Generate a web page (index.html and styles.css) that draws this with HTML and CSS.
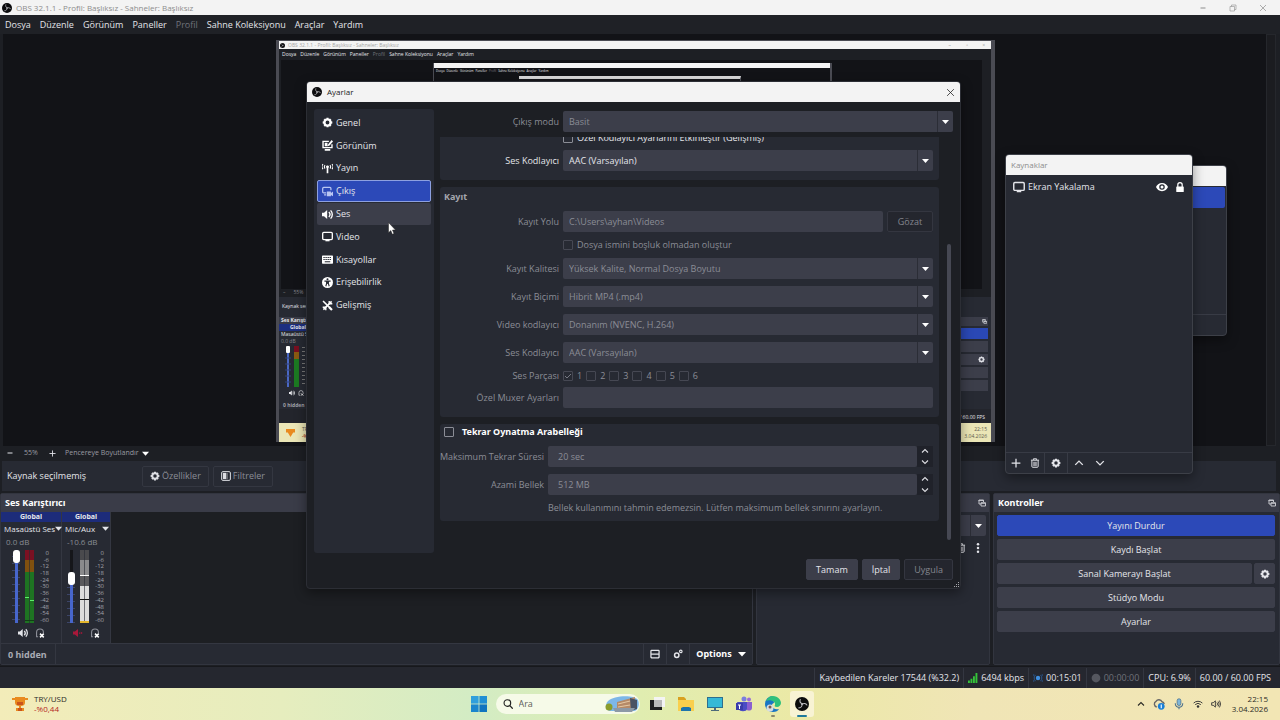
FILE: index.html
```html
<!DOCTYPE html>
<html lang="tr">
<head>
    <meta charset="UTF-8">
    <meta name="viewport" content="width=device-width, initial-scale=1.0">
    <title>OBS 32.1.1 - Ayarlar</title>
    <link rel="stylesheet" href="styles.css">
</head>
<body>
    <!-- Simgeler -->
    <svg class="defs" aria-hidden="true">
        <symbol id="i-obs" viewBox="0 0 20 20">
            <circle cx="10" cy="10" r="10" fill="#0b0b0d"/>
            <g fill="none" stroke="#b9b9be" stroke-width="1.5" stroke-linecap="round">
                <path d="M10 9.500C7.500 8.500 6.500 6 7.500 3.500"/>
                <path d="M10.500 10C12.500 8.500 15.500 9 17 11.500"/>
                <path d="M10 10.500C10.500 13 8.500 15.500 5.500 15.500"/>
            </g>
            <circle cx="10" cy="10" r="1.500" fill="#b9b9be"/>
        </symbol>
        <symbol id="i-gear" viewBox="0 0 16 16">
            <path fill="currentColor" fill-rule="evenodd" d="M6.500 1h3l.5 1.900 1.700-.9 2.200 2.200-.9 1.700 2 .6v3l-2 .6.9 1.700-2.200 2.200-1.700-.9-.5 1.900h-3l-.5-1.900-1.700.9-2.200-2.200.9-1.700-2-.6v-3l2-.6-.9-1.700L4.300 2l1.700.9zM8 5.200a2.800 2.800 0 1 0 0 5.600 2.800 2.800 0 0 0 0-5.600z"/>
        </symbol>
        <symbol id="i-look" viewBox="0 0 16 16">
            <path fill="none" stroke="currentColor" stroke-width="2" d="M10 2H1.500v9h13V6"/>
            <path fill="currentColor" d="M14 0l2 2-5 6-3 1 1-3zM4 13h8v2.500H4zM4 4h4v5H4z"/>
        </symbol>
        <symbol id="i-antenna" viewBox="0 0 16 16">
            <path fill="none" stroke="currentColor" stroke-width="1.600" d="M1.500 1.500a5.500 5.500 0 0 0 0 7.500M14.500 1.500a5.500 5.500 0 0 1 0 7.500M4.500 3a3.500 3.500 0 0 0 0 5M11.500 3a3.500 3.500 0 0 1 0 5"/>
            <path fill="currentColor" d="M8 3.500a2 2 0 0 1 1.200 3.700V15H6.800V7.200A2 2 0 0 1 8 3.500z"/>
        </symbol>
        <symbol id="i-output" viewBox="0 0 16 16">
            <path fill="none" stroke="currentColor" stroke-width="1.800" d="M6 10H2.500A1.500 1.500 0 0 1 1 8.500v-5A1.500 1.500 0 0 1 2.500 2h9A1.500 1.500 0 0 1 13 3.500V6M3 13h3"/>
            <path fill="currentColor" d="M7 8h6v2l3-2v7l-3-2v2H7z"/>
        </symbol>
        <symbol id="i-speaker" viewBox="0 0 16 16">
            <path fill="currentColor" d="M0 5.500h3L7.500 1.500v13L3 10.500H0z"/>
            <path fill="none" stroke="currentColor" stroke-width="2" d="M10 4.500a5 5 0 0 1 0 7M12.500 2a8.500 8.500 0 0 1 0 12"/>
        </symbol>
        <symbol id="i-monitor" viewBox="0 0 16 16">
            <rect x="1" y="2" width="14" height="10.500" rx="1.500" fill="none" stroke="currentColor" stroke-width="1.900"/>
            <path fill="currentColor" d="M5 13h6v2H5z"/>
        </symbol>
        <symbol id="i-keys" viewBox="0 0 16 16">
            <rect x="0" y="2" width="16" height="12" rx="1" fill="currentColor"/>
            <path stroke="#272a33" stroke-width="1.500" stroke-dasharray="2 1" d="M2 5h12M2 8h12"/>
            <path stroke="#272a33" stroke-width="1.500" d="M4 11.300h8"/>
        </symbol>
        <symbol id="i-access" viewBox="0 0 16 16">
            <circle cx="8" cy="8" r="8" fill="currentColor"/>
            <circle cx="8" cy="3.300" r="1.500" fill="#272a33"/>
            <path fill="none" stroke="#272a33" stroke-width="1.600" d="M3.500 6h9M6.800 6v3.500L5.500 13.500M9.200 6v3.500l1.300 4"/>
            <path fill="#272a33" d="M6.200 6h3.600v4H6.200z"/>
        </symbol>
        <symbol id="i-tools" viewBox="0 0 16 16">
            <path fill="none" stroke="currentColor" stroke-width="2.200" d="M1.500 1.500L10 10M14 2L2 14"/>
            <path fill="none" stroke="currentColor" stroke-width="3.200" d="M10 10l4.500 4.500"/>
            <path fill="none" stroke="currentColor" stroke-width="2" d="M10.500 1.500v4h4.500M1 10.500h4.500V15"/>
        </symbol>
        <symbol id="i-eye" viewBox="0 0 16 16">
            <path fill="currentColor" fill-rule="evenodd" d="M8 2.500c4 0 6.800 2.500 8 5.500-1.200 3-4 5.500-8 5.500S1.200 11 0 8c1.200-3 4-5.500 8-5.500zM8 4.300a3.700 3.700 0 1 0 0 7.400 3.700 3.700 0 0 0 0-7.400zM8 6a2 2 0 1 1 0 4 2 2 0 0 1 0-4z"/>
        </symbol>
        <symbol id="i-lock" viewBox="0 0 16 16">
            <path fill="none" stroke="currentColor" stroke-width="2" d="M4.500 8V4.500a3.500 3.500 0 0 1 7 0V8"/>
            <rect x="2" y="7" width="12" height="9" rx="1" fill="currentColor"/>
        </symbol>
        <symbol id="i-plus" viewBox="0 0 16 16">
            <path stroke="currentColor" stroke-width="2" d="M8 1v14M1 8h14"/>
        </symbol>
        <symbol id="i-minus" viewBox="0 0 16 16">
            <path stroke="currentColor" stroke-width="2" d="M3 8h10"/>
        </symbol>
        <symbol id="i-trash" viewBox="0 0 16 16">
            <path fill="none" stroke="currentColor" stroke-width="1.600" d="M1.500 3.500h13M5.500 3V1.300h5V3M3 4v9.500a1.300 1.300 0 0 0 1.300 1.300h7.400A1.300 1.300 0 0 0 13 13.500V4"/>
            <path fill="currentColor" opacity=".6" d="M5 6h6v7H5z"/>
        </symbol>
        <symbol id="i-up" viewBox="0 0 16 16">
            <path fill="none" stroke="currentColor" stroke-width="2.200" d="M2 11l6-6 6 6"/>
        </symbol>
        <symbol id="i-down" viewBox="0 0 16 16">
            <path fill="none" stroke="currentColor" stroke-width="2.200" d="M2 5l6 6 6-6"/>
        </symbol>
        <symbol id="i-caret" viewBox="0 0 16 16">
            <path fill="currentColor" d="M0 4h16l-8 9z"/>
        </symbol>
        <symbol id="i-float" viewBox="0 0 16 16">
            <path fill="none" stroke="currentColor" stroke-width="2" d="M6 10H2V2h9v4M1 3h10"/>
            <path fill="none" stroke="currentColor" stroke-width="2" d="M6 7.500h9V14H6zM6 8.500h9"/>
        </symbol>
        <symbol id="i-filter" viewBox="0 0 16 16">
            <rect x="1" y="1" width="14" height="14" rx="2" fill="none" stroke="currentColor" stroke-width="1.600"/>
            <path fill="currentColor" d="M3 3h5v10H3z"/>
            <path fill="currentColor" opacity=".4" d="M8 3h3v10H8z"/>
        </symbol>
        <symbol id="i-phones" viewBox="0 0 16 16">
            <path fill="none" stroke="currentColor" stroke-width="1.800" d="M5 14H2.500V7a5.500 5.500 0 0 1 11 0v1"/>
            <path stroke="#fff" stroke-width="2.400" d="M8 9l6 6M14 9l-6 6"/>
        </symbol>
        <symbol id="i-muted" viewBox="0 0 16 16">
            <path fill="currentColor" d="M0 5.500h3L8 1.500v13L3 10.500H0zM9.500 7h2v2h-2zM12.500 6l3 2-3 2z"/>
        </symbol>
        <symbol id="i-rows" viewBox="0 0 16 16">
            <path fill="none" stroke="currentColor" stroke-width="2" d="M2.500 2h11l1 1v10l-1 1h-11l-1-1V3zM2 8h12"/>
        </symbol>
        <symbol id="i-gears" viewBox="0 0 16 16">
            <circle cx="6" cy="10" r="3.500" fill="none" stroke="currentColor" stroke-width="2.400"/>
            <circle cx="12.500" cy="3.800" r="2" fill="none" stroke="currentColor" stroke-width="1.800"/>
        </symbol>
        <symbol id="i-close" viewBox="0 0 16 16">
            <path stroke="currentColor" stroke-width="1.400" d="M2 2l12 12M14 2L2 14"/>
        </symbol>
        <symbol id="i-max" viewBox="0 0 16 16">
            <path fill="none" stroke="currentColor" stroke-width="1.200" d="M2 5h9v9H2zM5 5V2h9v9h-3"/>
        </symbol>
    </svg>

    <header class="titlebar">
        <svg class="logo"><use href="#i-obs"/></svg>
        <span class="titlebar-text">OBS 32.1.1 - Profil: Başlıksız - Sahneler: Başlıksız</span>
        <button aria-label="Küçült"><svg class="ic8"><use href="#i-minus"/></svg></button>
        <button aria-label="Ekranı kapla"><svg class="ic8"><use href="#i-max"/></svg></button>
        <button aria-label="Kapat"><svg class="ic8"><use href="#i-close"/></svg></button>
    </header>

    <nav class="menubar">
        <a href="#">Dosya</a>
        <a href="#">Düzenle</a>
        <a href="#">Görünüm</a>
        <a href="#">Paneller</a>
        <a href="#" class="off">Profil</a>
        <a href="#">Sahne Koleksiyonu</a>
        <a href="#">Araçlar</a>
        <a href="#">Yardım</a>
    </nav>

    <!-- Önizleme -->
    <main class="preview">
        <div class="canvas">
            <div class="mirror">
                <div class="m-title"><svg><use href="#i-obs"/></svg><span>OBS 32.1.1 - Profil: Başlıksız - Sahneler: Başlıksız</span><i>–</i><i>▫</i><i>×</i></div>
                <div class="m-menu"><span>Dosya</span><span>Düzenle</span><span>Görünüm</span><span>Paneller</span><span class="off">Profil</span><span>Sahne Koleksiyonu</span><span>Araçlar</span><span>Yardım</span></div>
                <div class="m-view">
                    <div class="mm">
                        <div class="mm-title"></div>
                        <div class="mm-menu"><span>Dosya</span><span>Düzenle</span><span>Görünüm</span><span>Paneller</span><span class="off">Profil</span><span>Sahne Koleksiyonu</span><span>Araçlar</span><span>Yardım</span></div>
                        <div class="mmm"></div>
                    </div>
                </div>
                <div class="m-zoom"><span>–</span><span>55%</span></div>
                <div class="m-context">Kaynak seçilmemiş</div>
                <div class="m-docks">
                    <div class="m-mixer">
                        <b>Ses Karıştırıcı</b>
                        <em>Global</em>
                        <span>Masaüstü Ses</span>
                        <small>0.0 dB</small>
                        <svg class="m-meter" viewBox="0 0 24 41">
                            <path stroke="#4a68c4" stroke-width="2" d="M6 2v39"/>
                            <path stroke="#33437e" d="M3 12h6M3 18h6M3 24h6M3 30h6M3 36h6"/>
                            <rect x="4" y="0" width="4" height="7" rx="1" fill="#fff"/>
                            <path fill="#7a0f20" d="M12 0h5v6h-5z"/>
                            <path fill="#8a5a12" d="M12 6h5v7h-5z"/>
                            <path fill="#1c7a22" d="M12 13h5v28h-5z"/>
                            <path stroke="#777" stroke-dasharray="1 3" stroke-width="3" d="M21.500 1v40"/>
                        </svg>
                        <div class="m-icons"><svg><use href="#i-speaker"/></svg><svg><use href="#i-phones"/></svg></div>
                        <strong>0 hidden</strong>
                    </div>
                    <div class="m-controls">
                        <div class="m-head"><svg><use href="#i-float"/></svg></div>
                        <div class="m-btn on"></div>
                        <div class="m-btn"></div>
                        <div class="m-btn gear"><svg><use href="#i-gear"/></svg></div>
                        <div class="m-btn"></div>
                        <div class="m-btn"></div>
                    </div>
                </div>
                <div class="m-status">60.00 / 60.00 FPS</div>
                <div class="m-task">
                    <svg viewBox="0 0 10 10"><path fill="#e98a1f" d="M0 1h10v4H8l-3 5-3-5H0z"/></svg>
                    <span>TRY/USD<br><b>-%0,44</b></span>
                    <span class="m-clock">22:15<br>3.04.2026</span>
                </div>
            </div>
        </div>
        <div class="vscroll"></div>
    </main>

    <div class="zoombar">
        <button aria-label="Uzaklaştır"><svg class="ic8"><use href="#i-minus"/></svg></button>
        <span class="zoom-value">55%</span>
        <button aria-label="Yakınlaştır"><svg class="ic7"><use href="#i-plus"/></svg></button>
        <button class="zoom-mode">Pencereye Boyutlandır <svg class="ic7"><use href="#i-caret"/></svg></button>
    </div>

    <div class="contextbar">
        <span class="context-text">Kaynak seçilmemiş</span>
        <button class="btn-flat" disabled><svg class="ic10"><use href="#i-gear"/></svg>Özellikler</button>
        <button class="btn-flat" disabled><svg class="ic10"><use href="#i-filter"/></svg>Filtreler</button>
    </div>

    <!-- Paneller -->
    <div class="docks">
        <section class="dock mixer">
            <h2>Ses Karıştırıcı</h2>
            <div class="strips">
                <div class="strip">
                    <div class="strip-tag">Global</div>
                    <button class="strip-name">Masaüstü Ses <svg class="ic7"><use href="#i-caret"/></svg></button>
                    <div class="strip-db">0.0 dB</div>
                    <div class="levels">
                        <input class="fader" type="range" min="0" max="100" value="100" aria-label="Masaüstü Ses seviyesi">
                        <svg class="meter" viewBox="0 0 10 73">
                            <path fill="#7a1022" d="M0 0h9v10H0z"/>
                            <path fill="#80500f" d="M0 10h9v12H0z"/>
                            <path fill="#1e7322" d="M0 22h9v51H0z"/>
                            <path stroke="#272a33" stroke-width="1" d="M4.500 0v73" opacity=".6"/>
                            <path stroke="#5cf06a" d="M0 47.500h4M5 50.500h4"/>
                            <path stroke="#123d16" d="M0 70.500h9"/>
                        </svg>
                        <ol class="scale"><li>0</li><li>-6</li><li>-12</li><li>-18</li><li>-24</li><li>-30</li><li>-36</li><li>-42</li><li>-48</li><li>-54</li><li>-60</li></ol>
                    </div>
                    <div class="strip-icons">
                        <button aria-label="Sessiz"><svg class="ic10"><use href="#i-speaker"/></svg></button>
                        <button aria-label="Dinleme" class="dim"><svg class="ic10"><use href="#i-phones"/></svg></button>
                    </div>
                </div>
                <div class="strip narrow">
                    <div class="strip-tag">Global</div>
                    <button class="strip-name">Mic/Aux <svg class="ic7"><use href="#i-caret"/></svg></button>
                    <div class="strip-db">-10.6 dB</div>
                    <div class="levels">
                        <input class="fader low" type="range" min="0" max="100" value="63" aria-label="Mic/Aux seviyesi">
                        <svg class="meter" viewBox="0 0 10 73">
                            <path fill="#4a4a4d" d="M0 0h9v10H0z"/>
                            <path fill="#8a8a8c" d="M0 10h9v15H0z"/>
                            <path fill="#5a5a5d" d="M0 25h9v11H0z"/>
                            <path fill="#dcdcdc" d="M0 36h9v35H0z"/>
                            <path stroke="#272a33" stroke-width="1" d="M4.500 0v73" opacity=".6"/>
                            <path stroke="#fff" d="M0 25.500h9"/>
                            <path stroke="#111" d="M0 49.500h9"/>
                            <path stroke="#e3b62c" stroke-width="2" d="M0 72h9"/>
                        </svg>
                        <ol class="scale"><li>0</li><li>-6</li><li>-12</li><li>-18</li><li>-24</li><li>-30</li><li>-36</li><li>-42</li><li>-48</li><li>-54</li><li>-60</li></ol>
                    </div>
                    <div class="strip-icons">
                        <button aria-label="Sesi aç" class="muted"><svg class="ic10"><use href="#i-muted"/></svg></button>
                        <button aria-label="Dinleme" class="dim"><svg class="ic10"><use href="#i-phones"/></svg></button>
                    </div>
                </div>
            </div>
            <footer class="mixer-foot">
                <span class="hidden-count">0 hidden</span>
                <button aria-label="Düzen"><svg class="ic10"><use href="#i-rows"/></svg></button>
                <button aria-label="Ses ayarları"><svg class="ic10"><use href="#i-gears"/></svg></button>
                <button class="options">Options <svg class="ic8"><use href="#i-caret"/></svg></button>
            </footer>
        </section>

        <section class="dock transitions">
            <h2><svg class="ic8"><use href="#i-float"/></svg></h2>
            <select class="select" aria-label="Geçiş"><option></option></select>
            <div class="trans-tools">
                <button aria-label="Sil"><svg class="ic10"><use href="#i-trash"/></svg></button>
                <button aria-label="Diğer"><svg class="ic10" viewBox="0 0 16 16"><g fill="currentColor"><circle cx="8" cy="2" r="2"/><circle cx="8" cy="8" r="2"/><circle cx="8" cy="14" r="2"/></g></svg></button>
            </div>
        </section>

        <section class="dock controls">
            <h2><span>Kontroller</span><svg class="ic8"><use href="#i-float"/></svg></h2>
            <div class="control-list">
                <button class="btn primary">Yayını Durdur</button>
                <button class="btn">Kaydı Başlat</button>
                <div class="control-pair">
                    <button class="btn">Sanal Kamerayı Başlat</button>
                    <button class="btn" aria-label="Sanal kamera ayarları"><svg class="ic10"><use href="#i-gear"/></svg></button>
                </div>
                <button class="btn">Stüdyo Modu</button>
                <button class="btn">Ayarlar</button>
            </div>
        </section>
    </div>

    <div class="statusbar">
        <span>Kaybedilen Kareler 17544 (%32.2)</span>
        <span><svg class="ic10" viewBox="0 0 16 16"><path fill="#35c43a" d="M0 12h3v4H0zM4 9h3v7H4zM8 5h3v11H8zM12 0h3v16h-3z"/></svg>6494 kbps</span>
        <span><svg class="ic10" viewBox="0 0 16 16"><circle cx="8" cy="8" r="3.500" fill="#3f8fe0"/><path fill="none" stroke="#2a5a94" stroke-width="1.500" d="M4 3a7 7 0 0 0 0 10M12 3a7 7 0 0 1 0 10M1.500 2a9 9 0 0 0 0 12M14.500 2a9 9 0 0 1 0 12"/></svg>00:15:01</span>
        <span class="off"><svg class="ic10" viewBox="0 0 16 16"><circle cx="8" cy="8" r="7" fill="#55575f"/></svg>00:00:00</span>
        <span>CPU: 6.9%</span>
        <span>60.00 / 60.00 FPS</span>
    </div>

    <!-- Görev çubuğu -->
    <footer class="taskbar">
        <div class="widget">
            <svg class="ic16" viewBox="0 0 16 16"><path fill="#e98a1f" d="M0 2h3v2H0zM13 2h3v2h-3zM3 1h10v6c0 2-2 3-4 3v2h3v3H4v-3h3v-2C5 10 3 9 3 7z"/><path fill="#c9541c" d="M5 6h6v3H5zM6 12h4v3H6z"/></svg>
            <p>TRY/USD<br><b>-%0,44</b></p>
        </div>
        <div class="apps">
            <button aria-label="Başlat"><svg class="ic16" viewBox="0 0 16 16"><path fill="#2f9fdc" d="M0 0h7.600v7.600H0z"/><path fill="#1f8fd4" d="M8.400 0H16v7.600H8.400z"/><path fill="#1b86cd" d="M0 8.400h7.600V16H0z"/><path fill="#0f74bf" d="M8.400 8.400H16V16H8.400z"/></svg></button>
            <label class="search">
                <svg class="ic10" viewBox="0 0 16 16"><circle cx="7" cy="6.500" r="5.300" fill="none" stroke="#222" stroke-width="1.800"/><path stroke="#222" stroke-width="2" d="M11 10.500l4.500 5"/></svg>
                <input type="text" placeholder="Ara" aria-label="Ara">
                <svg class="search-art" viewBox="0 0 34 16">
                    <path fill="#7db7e8" d="M3 5C8 0 28-2 33 4c2 5 0 10-4 11H6C1 15-1 10 3 5z"/>
                    <path fill="#b58a68" d="M12 6l18-5v12H12z"/>
                    <path fill="#4a5263" d="M25 2l7 2v9l-6 2z"/>
                    <path stroke="#e6c9a4" stroke-width="1" d="M13 8l12-3M13 11l12-2"/>
                    <path fill="#8c99a6" d="M8 12h22l-3 4H10z"/>
                    <circle cx="4" cy="11" r="3.500" fill="#8a9c2c"/>
                </svg>
            </label>
            <button aria-label="Görev görünümü"><svg class="ic16" viewBox="0 0 16 16"><path fill="#f4f4f4" d="M5 1h11v10H5z"/><path fill="#1d1d1f" d="M1 4h4v7h8v3H1z"/><path fill="#b9b9b9" d="M5 4h8v7H5z"/></svg></button>
            <button aria-label="Dosya Gezgini"><svg class="ic16" viewBox="0 0 16 16"><path fill="#d9a120" d="M0 1h6l2 2v4H0z"/><path fill="#f9cf4d" d="M0 4h16v11H0z"/><path fill="#1c74ad" d="M3 15v-3l2-1h6l2 1v3z"/></svg></button>
            <button aria-label="Bilgisayar"><svg class="ic16" viewBox="0 0 16 16"><path fill="#2d6f8f" d="M0 1h16v11H0z"/><path fill="#35b9d6" d="M1 2h14v9H1z"/><path fill="#4d6a7a" d="M7 12h2v2h3v1H4v-1h3z"/></svg></button>
            <button aria-label="Teams"><svg class="ic16" viewBox="0 0 16 16"><circle cx="8" cy="3" r="2.500" fill="#7a7de0"/><circle cx="13" cy="3.500" r="2" fill="#9a6bd8"/><path fill="#8a5fd0" d="M9 6h7v6c0 3-4 3-5 2z"/><path fill="#4a4cc4" d="M1 6h10v7c0 3-8 3-8 0z"/><path fill="#3a3cab" d="M0 7h7v7H0z"/><path stroke="#fff" d="M2 9h3M3.500 9v4"/></svg></button>
            <button aria-label="Edge" class="running"><svg class="ic16" viewBox="0 0 16 16"><path fill="#1976c4" d="M8 0a8 8 0 0 0-8 8c0 5 4 8 8 8 3 0 5-1 6-3-4 1-7-1-7-4 0-1 1-2 2-2z"/><path fill="#2fc07c" d="M1 5C3 1 6 0 8 0c5 0 8 4 8 7 0 2-2 4-4 4s-3-1-2-2c1-3-4-6-9-4z"/><circle cx="5" cy="12" r="3.500" fill="#d8dde2"/><circle cx="5" cy="11" r="1.500" fill="#7a5a4c"/></svg></button>
            <button aria-label="OBS" class="running active"><svg class="ic14"><use href="#i-obs"/></svg></button>
        </div>
        <div class="tray">
            <svg class="ic8"><use href="#i-up"/></svg>
            <svg class="ic12" viewBox="0 0 16 16"><path fill="none" stroke="#666" stroke-width="1.800" d="M5 12a4 4 0 0 1-1-7.500A4.500 4.500 0 0 1 12 5a4 4 0 0 1 3 3"/><circle cx="11" cy="11" r="4.500" fill="#1a7fd6"/><path stroke="#fff" stroke-width="1.500" d="M11 8.500v5"/></svg>
            <svg class="ic12" viewBox="0 0 16 16"><rect x="5.500" y="1" width="5" height="9" rx="2.500" fill="#7fb5d8" stroke="#4a6f8c"/><path fill="none" stroke="#4a6f8c" stroke-width="1.400" d="M3 7c0 7 10 7 10 0M8 12v3"/></svg>
            <svg class="ic10" viewBox="0 0 16 16"><path fill="none" stroke="#333" stroke-width="1.500" d="M1 6.500a10 10 0 0 1 14 0M3.500 9a6.500 6.500 0 0 1 9 0"/><circle cx="8" cy="12" r="2" fill="#333"/></svg>
            <svg class="ic10" viewBox="0 0 16 16"><path fill="none" stroke="#333" stroke-width="1.400" d="M1 6h2.500L7 3v10l-3.500-3H1zM9.500 5.500a4 4 0 0 1 0 5M11.500 4a6.500 6.500 0 0 1 0 8M13.500 2.500a9 9 0 0 1 0 11"/></svg>
            <p>22:15<br>3.04.2026</p>
        </div>
    </footer>

    <!-- Sahneler penceresi -->
    <section class="window scenes">
        <div class="win-title"></div>
        <div class="scene-item"></div>
        <div class="win-tools"></div>
    </section>

    <!-- Kaynaklar penceresi -->
    <section class="window sources">
        <div class="win-title">Kaynaklar</div>
        <div class="source-item">
            <svg class="ic12"><use href="#i-monitor"/></svg>
            <span>Ekran Yakalama</span>
            <button aria-label="Göster"><svg class="ic12"><use href="#i-eye"/></svg></button>
            <button aria-label="Kilitle"><svg class="ic10"><use href="#i-lock"/></svg></button>
        </div>
        <div class="win-tools">
            <button aria-label="Ekle"><svg class="ic10"><use href="#i-plus"/></svg></button>
            <button aria-label="Sil"><svg class="ic10"><use href="#i-trash"/></svg></button>
            <button aria-label="Özellikler" class="split"><svg class="ic10"><use href="#i-gear"/></svg></button>
            <button aria-label="Yukarı" class="split"><svg class="ic10"><use href="#i-up"/></svg></button>
            <button aria-label="Aşağı"><svg class="ic10"><use href="#i-down"/></svg></button>
        </div>
    </section>

    <!-- Ayarlar penceresi -->
    <section class="window settings">
        <div class="win-title">
            <svg class="logo"><use href="#i-obs"/></svg>
            <span>Ayarlar</span>
            <button aria-label="Kapat"><svg class="ic9"><use href="#i-close"/></svg></button>
        </div>
        <div class="settings-body">
            <nav class="side">
                <div class="side-list">
                    <a href="#"><svg class="ic11"><use href="#i-gear"/></svg>Genel</a>
                    <a href="#"><svg class="ic11"><use href="#i-look"/></svg>Görünüm</a>
                    <a href="#"><svg class="ic11"><use href="#i-antenna"/></svg>Yayın</a>
                    <a href="#" class="current"><svg class="ic11"><use href="#i-output"/></svg>Çıkış</a>
                    <a href="#" class="hover"><svg class="ic11"><use href="#i-speaker"/></svg>Ses</a>
                    <a href="#"><svg class="ic11"><use href="#i-monitor"/></svg>Video</a>
                    <a href="#"><svg class="ic11"><use href="#i-keys"/></svg>Kısayollar</a>
                    <a href="#"><svg class="ic11"><use href="#i-access"/></svg>Erişebilirlik</a>
                    <a href="#"><svg class="ic11"><use href="#i-tools"/></svg>Gelişmiş</a>
                </div>
            </nav>
            <form class="pane">
                <div class="mode field">
                    <label for="mode">Çıkış modu</label>
                    <select id="mode" class="select" disabled><option>Basit</option></select>
                </div>
                <div class="scroll">
                    <div class="groups">
                        <fieldset class="group stream">
                            <div class="field check-row live">
                                <span></span>
                                <label><input type="checkbox">Özel Kodlayıcı Ayarlarını Etkinleştir (Gelişmiş)</label>
                            </div>
                            <div class="field live">
                                <label for="enc1">Ses Kodlayıcı</label>
                                <select id="enc1" class="select"><option>AAC (Varsayılan)</option></select>
                            </div>
                        </fieldset>
                        <fieldset class="group record">
                            <h3>Kayıt</h3>
                            <div class="field">
                                <label for="path">Kayıt Yolu</label>
                                <div class="path">
                                    <input id="path" class="text" type="text" value="C:\Users\ayhan\Videos" disabled>
                                    <button type="button" class="btn outline" disabled>Gözat</button>
                                </div>
                            </div>
                            <div class="field check-row">
                                <span></span>
                                <label><input type="checkbox" disabled>Dosya ismini boşluk olmadan oluştur</label>
                            </div>
                            <div class="field">
                                <label for="quality">Kayıt Kalitesi</label>
                                <select id="quality" class="select" disabled><option>Yüksek Kalite, Normal Dosya Boyutu</option></select>
                            </div>
                            <div class="field">
                                <label for="format">Kayıt Biçimi</label>
                                <select id="format" class="select" disabled><option>Hibrit MP4 (.mp4)</option></select>
                            </div>
                            <div class="field">
                                <label for="venc">Video kodlayıcı</label>
                                <select id="venc" class="select" disabled><option>Donanım (NVENC, H.264)</option></select>
                            </div>
                            <div class="field">
                                <label for="enc2">Ses Kodlayıcı</label>
                                <select id="enc2" class="select" disabled><option>AAC (Varsayılan)</option></select>
                            </div>
                            <div class="field tracks-row">
                                <span>Ses Parçası</span>
                                <div class="tracks">
                                    <label><input type="checkbox" checked disabled>1</label>
                                    <label><input type="checkbox" disabled>2</label>
                                    <label><input type="checkbox" disabled>3</label>
                                    <label><input type="checkbox" disabled>4</label>
                                    <label><input type="checkbox" disabled>5</label>
                                    <label><input type="checkbox" disabled>6</label>
                                </div>
                            </div>
                            <div class="field">
                                <label for="muxer">Özel Muxer Ayarları</label>
                                <input id="muxer" class="text" type="text" disabled>
                            </div>
                        </fieldset>
                        <fieldset class="group replay">
                            <label class="group-check"><input type="checkbox">Tekrar Oynatma Arabelleği</label>
                            <div class="field">
                                <label for="maxtime">Maksimum Tekrar Süresi</label>
                                <div class="spin">
                                    <input id="maxtime" class="text" type="text" value="20 sec" disabled>
                                    <div class="spin-btns">
                                        <button type="button" aria-label="Artır"><svg class="ic8"><use href="#i-up"/></svg></button>
                                        <button type="button" aria-label="Azalt"><svg class="ic8"><use href="#i-down"/></svg></button>
                                    </div>
                                </div>
                            </div>
                            <div class="field">
                                <label for="maxmem">Azami Bellek</label>
                                <div class="spin">
                                    <input id="maxmem" class="text" type="text" value="512 MB" disabled>
                                    <div class="spin-btns">
                                        <button type="button" aria-label="Artır"><svg class="ic8"><use href="#i-up"/></svg></button>
                                        <button type="button" aria-label="Azalt"><svg class="ic8"><use href="#i-down"/></svg></button>
                                    </div>
                                </div>
                            </div>
                            <div class="field">
                                <span></span>
                                <p>Bellek kullanımını tahmin edemezsin. Lütfen maksimum bellek sınırını ayarlayın.</p>
                            </div>
                        </fieldset>
                    </div>
                    <div class="scrollbar"><div class="thumb"></div></div>
                </div>
            </form>
        </div>
        <div class="actions">
            <button class="btn">Tamam</button>
            <button class="btn">İptal</button>
            <button class="btn outline" disabled>Uygula</button>
        </div>
        <svg class="grip" viewBox="0 0 6 6"><path fill="#a5a6ab" d="M4 0h1v1H4zM2 2h1v1H2zM4 2h1v1H4zM0 4h1v1H0zM2 4h1v1H2zM4 4h1v1H4z"/></svg>
    </section>

    <svg class="cursor" viewBox="0 0 8 13"><path fill="#fff" stroke="#222" stroke-width=".5" d="M.5.500v10.300l2.300-2.200 1.500 3.700 1.700-.7-1.500-3.600h3z"/></svg>
</body>
</html>
```
FILE: styles.css
```css
* {
    box-sizing: border-box;
}
body {
    margin: 0;
    height: 100vh;
    display: flex;
    flex-direction: column;
    overflow: hidden;
    background-color: #1d1f24;
    color: #e4e5ea;
    font-family: "Open Sans", "Noto Sans", sans-serif;
    font-size: 9px;
    line-height: 12px;
}
button, input, select {
    font: inherit;
    color: inherit;
    margin: 0;
}
button {
    background: none;
    border: none;
    padding: 0;
    display: flex;
    align-items: center;
    justify-content: center;
}
a {
    color: inherit;
    text-decoration: none;
}
svg {
    flex: none;
    display: block;
}
p {
    margin: 0;
}
.defs {
    position: absolute;
    width: 0;
    height: 0;
}
.off {
    color: #70727a;
}
.ic7 { width: 7px; height: 7px; }
.ic8 { width: 8px; height: 8px; }
.ic9 { width: 9px; height: 9px; }
.ic10 { width: 10px; height: 10px; }
.ic11 { width: 11px; height: 11px; }
.ic12 { width: 12px; height: 12px; }
.ic14 { width: 14px; height: 14px; }
.ic16 { width: 16px; height: 16px; }
.logo { width: 10px; height: 10px; }

/* Başlık ve menü */
.titlebar {
    flex: none;
    height: 15px;
    display: flex;
    align-items: center;
    gap: 22px;
    padding: 0 13px 0 2px;
    background-color: #f3f3f3;
    color: #8d8d8d;
    font-size: 8px;
}
.titlebar-text {
    flex: 1;
    margin-left: -18px;
}
.menubar {
    flex: none;
    height: 19px;
    display: flex;
    align-items: center;
    gap: 9px;
    padding: 0 5px;
    background-color: #1f2126;
}

/* Önizleme */
.preview {
    flex: 1;
    min-height: 0;
    display: flex;
    padding: 0 4px 0 3px;
}
.canvas {
    flex: 1;
    position: relative;
    background-color: #121317;
    overflow: hidden;
}
.vscroll {
    width: 10px;
    background-color: #1b1c20;
    border: 1px solid #25272c;
}
.mirror {
    position: absolute;
    left: 273px;
    top: 6px;
    width: 719px;
    height: 402px;
    display: flex;
    flex-direction: column;
    border: solid #4a4b53;
    border-width: 1px 4px 0 3px;
    background-color: #1d1f24;
    font-size: 5px;
    line-height: 7px;
}
.m-title {
    height: 8px;
    display: flex;
    align-items: center;
    gap: 3px;
    padding: 0 6px 0 1px;
    background-color: #f3f3f3;
    color: #a5a5a5;
}
.m-title span { flex: 1; }
.m-title svg { width: 5px; height: 5px; }
.m-title i { width: 14px; text-align: right; }
.m-menu {
    height: 11px;
    display: flex;
    gap: 4px;
    padding: 2px 3px;
}
.m-view {
    flex: 1;
    background-color: #121317;
    margin: 0 9px 0 2px;
    padding: 3px 0 0 152px;
}
.mm {
    width: 399px;
    height: 224px;
    border: solid #4a4b53;
    border-width: 0 2px 0 1px;
    font-size: 3px;
    line-height: 4px;
}
.mm-title {
    height: 5px;
    background-color: #f3f3f3;
}
.mm-menu {
    display: flex;
    gap: 2px;
    padding: 1px 2px;
}
.mmm {
    width: 222px;
    height: 120px;
    margin: 2px 0 0 85px;
    border-top: 3px solid #d9d9da;
    border-right: 1px solid #4a4b53;
    background-color: #17181c;
}
.m-zoom {
    height: 8px;
    display: flex;
    gap: 8px;
    padding-left: 4px;
    color: #85868c;
}
.m-context {
    height: 18px;
    padding: 6px 3px;
    background-color: #272a33;
}
.m-docks {
    height: 94px;
    display: flex;
    justify-content: space-between;
    background-color: #272a33;
}
.m-mixer {
    width: 60px;
    display: flex;
    flex-direction: column;
    padding-top: 2px;
    background-color: #272a33;
}
.m-mixer b {
    padding-left: 2px;
    background-color: #3a3c48;
}
.m-mixer em {
    padding-left: 11px;
    font-style: normal;
    font-weight: bold;
    background-color: #1d2f80;
}
.m-mixer span, .m-mixer small {
    padding-left: 2px;
    font-size: 5px;
}
.m-mixer small { color: #85868c; }
.m-meter {
    width: 24px;
    height: 41px;
    margin: 1px 0 3px 3px;
}
.m-icons {
    display: flex;
    gap: 3px;
    padding-left: 10px;
}
.m-icons svg { width: 6px; height: 6px; }
.m-mixer strong {
    margin-top: 6px;
    padding-left: 4px;
    color: #a0a1a8;
}
.m-controls {
    width: 160px;
    display: flex;
    flex-direction: column;
    gap: 2px;
    padding: 2px 3px 0;
}
.m-head {
    height: 9px;
    display: flex;
    justify-content: flex-end;
    background-color: #3a3c48;
}
.m-head svg { width: 5px; height: 5px; margin: 2px 1px; }
.m-btn {
    height: 11px;
    display: flex;
    justify-content: flex-end;
    background-color: #3c3e4a;
}
.m-btn.on { background-color: #2a48b5; }
.m-btn svg { width: 7px; height: 7px; margin: 2px 3px; }
.m-status {
    height: 14px;
    padding: 5px 6px 0;
    text-align: right;
    background-color: #23252c;
}
.m-task {
    height: 19px;
    display: flex;
    align-items: center;
    gap: 7px;
    padding: 0 4px 0 7px;
    background-color: #ebe6b6;
    color: #5c5a4c;
}
.m-task svg { width: 9px; height: 9px; }
.m-task b { color: #b0503a; }
.m-clock {
    margin-left: auto;
    text-align: right;
}

/* Önizleme altı */
.zoombar {
    flex: none;
    height: 14px;
    display: flex;
    align-items: center;
    padding: 0 5px;
    font-size: 7px;
    color: #9a9ba2;
}
.zoombar button { min-width: 10px; color: #e4e5ea; }
.zoom-value { width: 32px; text-align: center; }
.zoombar .zoom-mode {
    margin-left: 8px;
    gap: 3px;
    color: #9a9ba2;
}
.zoom-mode svg { color: #fff; }
.contextbar {
    flex: none;
    height: 30px;
    display: flex;
    align-items: center;
    gap: 4px;
    margin: 1px 4px 2px 2px;
    padding: 0 5px;
    background-color: #272a33;
}
.context-text { width: 131px; }
.btn-flat {
    height: 21px;
    padding: 0 7px;
    gap: 2px;
    border: 1px solid #343741;
    border-radius: 2px;
    color: #8b8d96;
}
.btn-flat svg { color: #dcdde2; }

/* Paneller */
.docks {
    flex: none;
    height: 172px;
    display: flex;
    gap: 3px;
}
.dock {
    display: flex;
    flex-direction: column;
    background-color: #272a33;
    border: 1px solid #32353f;
    border-radius: 2px;
}
.dock h2 {
    flex: none;
    height: 18px;
    margin: 0;
    padding: 0 3px 0 4px;
    display: flex;
    align-items: center;
    background-color: #3a3c48;
    font-size: 9px;
    line-height: 12px;
    color: #fff;
}
.dock h2, .mixer-foot, .strip-tag, .group h3, .group-check {
    font-family: "Noto Sans", "Open Sans", sans-serif;
}
.dock h2 svg { margin-left: auto; color: #c3c4ca; }
.mixer { flex: 1; }
.strips {
    flex: 1;
    display: flex;
    background-color: #1d1f23;
}
.strip {
    width: 61px;
    display: flex;
    flex-direction: column;
    background-color: #272a33;
    border-right: 1px solid #343741;
}
.strip.narrow { width: 49px; }
.strip-tag {
    height: 10px;
    font-size: 7px;
    line-height: 10px;
    font-weight: bold;
    text-align: center;
    background-color: #1d2c7a;
}
.strip-name {
    height: 13px;
    padding: 0 1px 0 3px;
    justify-content: space-between;
    font-size: 8px;
    white-space: nowrap;
}
.strip-db {
    height: 15px;
    padding-left: 5px;
    font-size: 8px;
    line-height: 14px;
    color: #888a92;
}
.levels {
    flex: none;
    height: 73px;
    display: flex;
    padding-left: 9px;
}
.narrow .levels { padding-left: 3px; }
.fader {
    appearance: none;
    writing-mode: vertical-lr;
    direction: rtl;
    width: 12px;
    height: 73px;
    background: linear-gradient(#4766cc, #4766cc) center / 3px 100% no-repeat,
        repeating-linear-gradient(#272a33 0 6px, #3c4568 6px 7px) center / 8px 100% no-repeat;
}
.fader.low {
    background: linear-gradient(#15161a 30px, #4766cc 30px) center / 3px 100% no-repeat,
        repeating-linear-gradient(#272a33 0 6px, #3c4568 6px 7px) center bottom / 8px 42px no-repeat;
}
.fader::-webkit-slider-thumb {
    appearance: none;
    width: 7px;
    height: 13px;
    border-radius: 3px;
    background-color: #fff;
}
.meter {
    width: 10px;
    height: 73px;
    margin-left: 3px;
}
.scale {
    margin: 0;
    padding: 0;
    width: 14px;
    list-style: none;
    display: flex;
    flex-direction: column;
    justify-content: space-between;
    text-align: right;
    font-size: 6px;
    line-height: 6px;
    color: #a0a2aa;
}
.strip-icons {
    flex: 1;
    display: flex;
    align-items: center;
    justify-content: center;
    gap: 7px;
}
.strip-icons .dim { color: #8b8d96; }
.strip-icons .muted { color: #a8183a; }
.mixer-foot {
    flex: none;
    height: 21px;
    display: flex;
    border-top: 1px solid #343741;
    font-weight: bold;
}
.hidden-count {
    padding: 5px 8px 0 7px;
    margin-right: auto;
    color: #a9abb3;
    border-right: 1px solid #343741;
}
.mixer-foot button {
    width: 23px;
    border-left: 1px solid #343741;
}
.mixer-foot .options {
    width: 63px;
    gap: 6px;
    color: #fff;
}
.transitions { width: 234px; }
.transitions .select { margin: 3px; }
.trans-tools {
    display: flex;
    justify-content: flex-end;
    gap: 7px;
    padding: 4px 6px;
}
.controls { width: 287px; }
.control-list {
    display: flex;
    flex-direction: column;
    gap: 3px;
    padding: 3px 4px 0 3px;
}
.control-pair {
    display: grid;
    grid-template-columns: 1fr 21px;
    gap: 2px;
}
.control-pair .btn { padding: 0; }
.btn {
    height: 21px;
    padding: 0 9px;
    border: 1px solid #3c3e4a;
    border-radius: 2px;
    background-color: #3c3e4a;
}
.btn.primary {
    background-color: #2c49b8;
    border-color: #2c49b8;
}
.btn.outline {
    background-color: #24262e;
    border-color: #343640;
    color: #85878f;
}

.statusbar {
    flex: none;
    height: 22px;
    margin-top: 1px;
    display: flex;
    justify-content: flex-end;
    padding: 1px 5px 0 0;
    background-color: #25272f;
    border-top: 1px solid #17181c;
}
.statusbar span {
    display: flex;
    align-items: center;
    gap: 3px;
    padding: 0 4px;
    border-left: 1px solid #343741;
}

/* Görev çubuğu */
.taskbar {
    flex: none;
    height: 32px;
    display: grid;
    grid-template-columns: 1fr auto 1fr;
    align-items: center;
    padding: 0 12px;
    background: linear-gradient(90deg, #f3ecb9, #e6edbe 22%, #d3ecc4 37%, #e0edb0 50%, #ebe9a6 62%, #f0e5b6 76%, #f2e6b4);
    color: #2b2b26;
    font-size: 8px;
    line-height: 10px;
}
.widget {
    display: flex;
    align-items: center;
    gap: 6px;
}
.widget b {
    font-weight: normal;
    color: #b3261e;
}
.apps {
    display: flex;
    align-items: center;
    gap: 5px;
}
.apps button {
    position: relative;
    width: 24px;
    height: 26px;
    border-radius: 3px;
}
.apps .active { background-color: #f8f3d4; }
.running::after {
    content: "";
    position: absolute;
    left: 10px;
    bottom: 0;
    width: 4px;
    height: 2px;
    border-radius: 1px;
    background-color: #8c8a6c;
}
.running.active::after {
    left: 7px;
    width: 10px;
    background-color: #1f7a9c;
}
.search {
    display: flex;
    align-items: center;
    width: 144px;
    height: 20px;
    padding: 0 1px 0 7px;
    gap: 6px;
    border-radius: 10px;
    background-color: #f6fae8;
}
.search input {
    flex: 1;
    min-width: 0;
    border: none;
    padding: 0;
    background: none;
    font-size: 9px;
}
.search input::placeholder { color: #5f5f5a; }
.search-art {
    width: 34px;
    height: 16px;
}
.tray {
    display: flex;
    align-items: center;
    justify-content: flex-end;
    gap: 8px;
}
.tray p {
    margin-left: 3px;
    text-align: right;
}

/* Pencereler */
.window {
    position: absolute;
    display: flex;
    flex-direction: column;
    background-color: #272a33;
    border: 1px solid #3d4048;
    border-radius: 4px;
    box-shadow: 0 4px 12px rgba(0, 0, 0, 0.4);
}
.win-title {
    flex: none;
    height: 20px;
    display: flex;
    align-items: center;
    padding: 0 5px;
    border-radius: 3px 3px 0 0;
    background-color: #f3f3f3;
    color: #8d8d8d;
    font-size: 8px;
}
.win-tools {
    height: 21px;
    margin-top: auto;
    display: flex;
    align-items: center;
    border-top: 1px solid #383b45;
}
.win-tools button {
    width: 19px;
    height: 20px;
}
.win-tools .split {
    width: 23px;
    border-left: 1px solid #383b45;
}
.scenes {
    left: 1041px;
    top: 165px;
    width: 186px;
    height: 171px;
}
.scene-item {
    height: 21px;
    margin: 1px;
    border-radius: 2px;
    background-color: #2c49b8;
}
.sources {
    left: 1005px;
    top: 154px;
    width: 188px;
    height: 320px;
}
.source-item {
    display: flex;
    align-items: center;
    gap: 3px;
    height: 24px;
    padding: 0 5px 0 7px;
}
.source-item span { flex: 1; }
.source-item button { width: 15px; color: #fff; }
.settings {
    left: 306px;
    top: 81px;
    width: 655px;
    height: 508px;
    background-color: #1d1f24;
    border-color: #2c2e35;
}
.settings .win-title {
    gap: 5px;
    color: #222;
}
.settings .win-title button { margin-left: auto; }
.settings-body {
    flex: 1;
    min-height: 0;
    display: flex;
    gap: 6px;
    padding: 7px 7px 0;
}
.side {
    width: 120px;
    padding: 3px;
    background-color: #272a33;
    border-radius: 3px;
}
.side-list {
    height: 204px;
    display: flex;
    flex-direction: column;
    gap: 1px;
}
.side-list a {
    flex: 1;
    display: flex;
    align-items: center;
    gap: 3px;
    padding-left: 4px;
    border: 1px solid transparent;
    border-radius: 2px;
}
.side-list svg { color: #fff; }
.side-list .current {
    background-color: #2c49b8;
    border-color: #8da0e0;
}
.side-list .current svg { color: #b9c6f2; }
.side-list .hover { background-color: #3c3e4a; }

/* Form */
.pane {
    flex: 1;
    min-width: 0;
    display: flex;
    flex-direction: column;
    padding-top: 2px;
    color: #8b8d96;
}
.field {
    display: grid;
    grid-template-columns: 111px 1fr;
    gap: 4px;
    align-items: center;
}
.field > label:first-child, .field > span {
    justify-self: end;
    white-space: nowrap;
}
.mode { grid-template-columns: 119px 1fr; }
.live { color: #e4e5ea; }
.select, .text {
    width: 100%;
    min-width: 0;
    height: 21px;
    padding: 0 6px;
    border: none;
    border-radius: 2px;
    background-color: #3c3e4a;
    opacity: 1;
}
.select {
    appearance: none;
    background-image: url("data:image/svg+xml,%3Csvg xmlns='http://www.w3.org/2000/svg' viewBox='0 0 16 21'%3E%3Cpath d='M.5 0v21' stroke='%232b2d36'/%3E%3Cpath d='M5 9h7l-3.500 4z' fill='%23fff'/%3E%3C/svg%3E");
    background-position: right center;
    background-repeat: no-repeat;
    background-size: 16px 21px;
}
.transitions .select { width: auto; }
.scroll {
    flex: 1;
    min-height: 0;
    display: flex;
    margin: 5px 0 13px;
}
.groups {
    flex: 1;
    display: flex;
    flex-direction: column;
    justify-content: flex-end;
    gap: 7px;
    padding-bottom: 19px;
    overflow: hidden;
}
.group {
    flex: none;
    display: flex;
    flex-direction: column;
    gap: 7px;
    min-width: 0;
    margin: 0;
    border: none;
    border-radius: 3px;
    background-color: #272a33;
}
.stream {
    gap: 6px;
    padding: 0 6px 9px 8px;
}
.record { padding: 4px 6px 9px 4px; }
.record .field { grid-template-columns: 115px 1fr; }
.group h3 {
    margin: 0 0 1px;
    font-size: 9px;
    line-height: 12px;
    color: #a4a6ae;
}
.path {
    display: grid;
    grid-template-columns: 1fr 46px;
    gap: 4px;
}
.path .btn { padding: 0; }
.check-row { height: 12px; }
.tracks-row { height: 10px; }
input[type="checkbox"] {
    appearance: none;
    width: 10px;
    height: 10px;
    border: 1px solid #8b8d96;
    border-radius: 1px;
}
input[type="checkbox"]:disabled { border-color: #464853; }
input[type="checkbox"]:checked {
    background: url("data:image/svg+xml,%3Csvg xmlns='http://www.w3.org/2000/svg' viewBox='0 0 8 8'%3E%3Cpath d='M1 4l2 2 4-4' fill='none' stroke='%23777983'/%3E%3C/svg%3E");
}
.check-row label, .tracks label, .group-check {
    display: flex;
    align-items: center;
    gap: 4px;
}
.tracks {
    display: flex;
    gap: 4px;
}
.replay { padding: 2px 6px 7px 4px; }
.replay .field { grid-template-columns: 100px 1fr; }
.group-check {
    gap: 8px;
    margin-bottom: 1px;
    font-weight: bold;
    color: #fff;
}
.spin {
    display: grid;
    grid-template-columns: 1fr 16px;
}
.spin .text { padding: 0 10px; }
.spin-btns {
    display: grid;
    background-color: #20222a;
    color: #dcdde2;
}
.scrollbar {
    width: 14px;
    display: flex;
    align-items: flex-end;
    padding-left: 8px;
}
.thumb {
    width: 4px;
    height: 296px;
    border-radius: 2px;
    background-color: #464853;
}
.actions {
    display: flex;
    justify-content: flex-end;
    gap: 4px;
    padding: 6px 7px 8px;
}
.grip {
    position: absolute;
    right: 0;
    bottom: 0;
    width: 6px;
    height: 6px;
}
.cursor {
    position: absolute;
    left: 388px;
    top: 222px;
    width: 8px;
    height: 13px;
}
```
